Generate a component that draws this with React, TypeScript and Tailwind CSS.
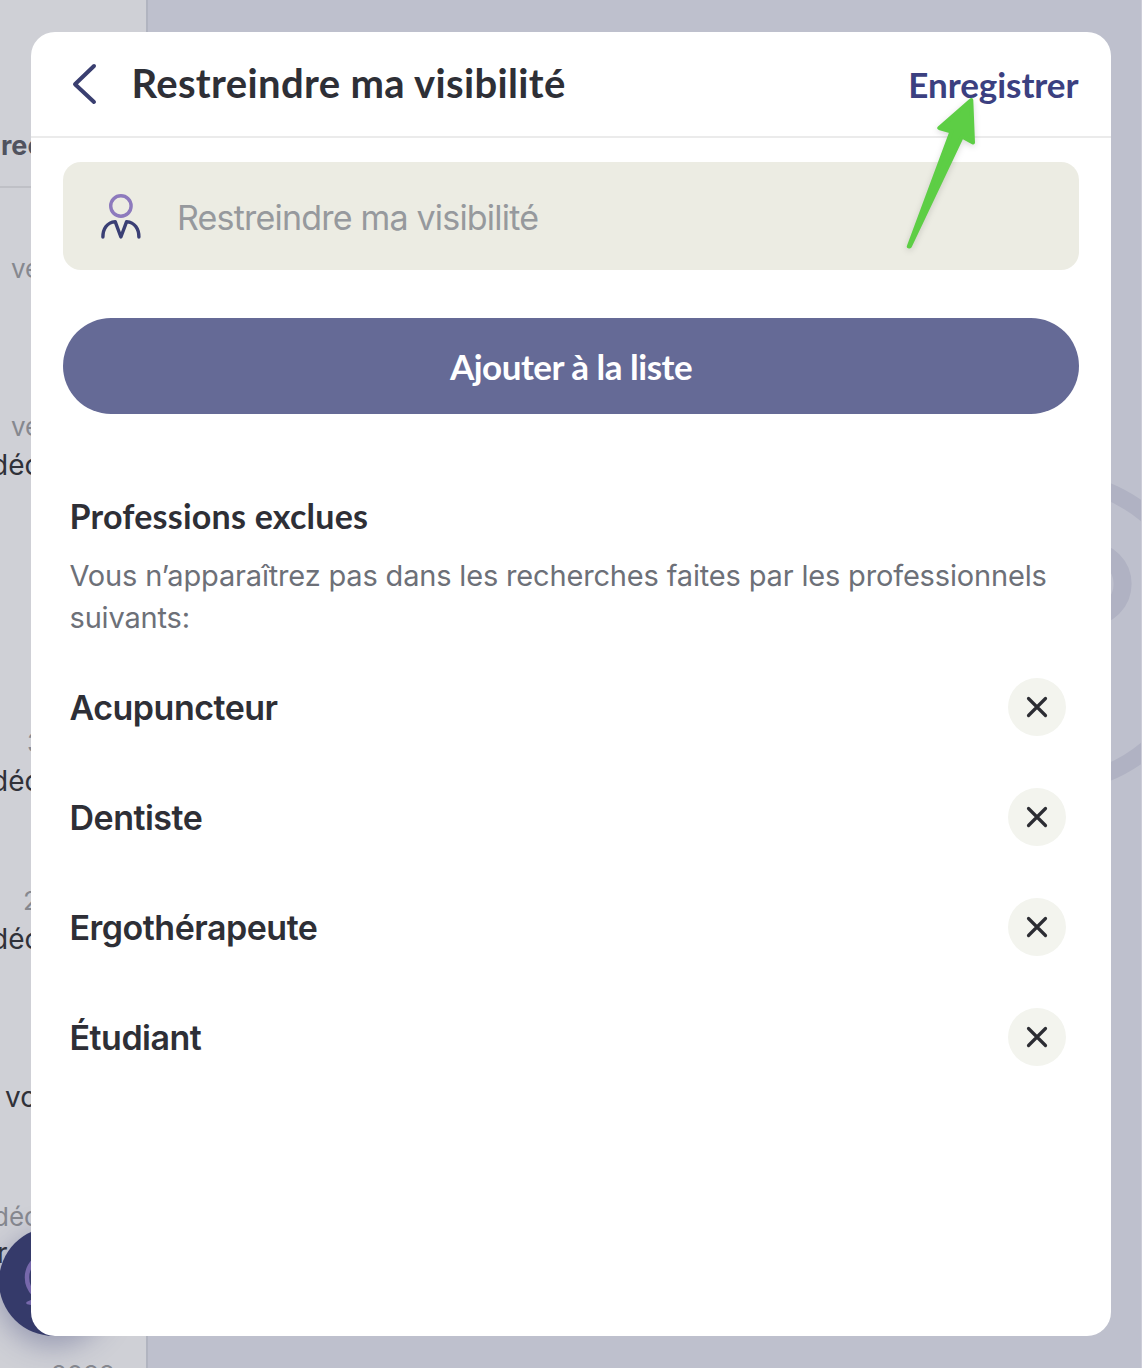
import React from "react";
import { clsx } from "clsx";

type Entry = { date: string; text: string; dateClass?: string; textClass?: string };

const entries: Entry[] = [
  { date: "ve", text: "", dateClass: "pl-[11px]" },
  { date: "ve", text: "déc", dateClass: "pl-[11px]", textClass: "-ml-[9px]" },
  { date: "", text: "" },
  { date: "3", text: "déc", dateClass: "pl-[27px]", textClass: "-ml-[9px]" },
  { date: "2", text: "déc", dateClass: "pl-[23px]", textClass: "-ml-[9px]" },
  { date: "", text: "vo", textClass: "pl-[5px]" },
  { date: "déc", text: "r", dateClass: "-ml-[7px]", textClass: "-ml-[3px] -mt-[2px]" },
  { date: "2022", text: "", dateClass: "pl-[51px]" },
];

const professions = ["Acupuncteur", "Dentiste", "Ergothérapeute", "Étudiant"];

function Sidebar() {
  return (
    <aside className="h-full w-[148px] shrink-0 overflow-hidden border-r-2 border-[#b1b4c0] bg-[#cfd0d6] whitespace-nowrap">
      <div className="flex h-[188px] items-end border-b-2 border-[#bfc0c6] pb-[23px] pl-px text-[27px] leading-[34px] font-bold text-[#51535f]">
        rec
      </div>
      {entries.map((entry, i) => (
        <div key={i} className="flex h-[158px] flex-col pt-[62px]">
          <div className={clsx("h-[38px] text-[26px] leading-[38px] text-[#86888f]", entry.dateClass)}>{entry.date}</div>
          <div className={clsx("h-[38px] text-[28px] leading-[38px] text-[#303139]", entry.textClass)}>{entry.text}</div>
        </div>
      ))}
    </aside>
  );
}

function Backdrop() {
  return (
    <div className="flex h-full w-full">
      <Sidebar />
      <div className="flex flex-1 justify-end border-r border-[#cccdd8] bg-[#bec0cd]">
        <svg className="mt-[460px] h-[340px] w-[181px]" viewBox="960 460 181 340" fill="none" stroke="#b0b2c3">
          <circle cx="1049" cy="632" r="152.5" strokeWidth="17" />
          <circle cx="1089.6" cy="584" r="33" strokeWidth="18" />
        </svg>
      </div>
    </div>
  );
}

function HelpButton() {
  return (
    <div className="absolute top-[1227px] -left-px h-[109px] w-[109px] rounded-full bg-[#353a6a] shadow-[0_8px_28px_2px_rgba(70,75,125,0.4)]">
      <svg className="h-full w-full" viewBox="0 0 109 109" fill="none" stroke="#7768ac" strokeWidth="4.5" strokeLinecap="round" strokeLinejoin="round">
        <circle cx="51.5" cy="50.5" r="23.5" />
        <path d="M28.5 76L36 72.5V77.5Z" fill="#7768ac" strokeWidth="2.5" />
      </svg>
    </div>
  );
}

function PersonIcon() {
  return (
    <svg className="mt-[2px] h-[50px] w-[44px]" viewBox="0 0 44 50" fill="none" strokeWidth="3.4" strokeLinecap="round" strokeLinejoin="round">
      <circle cx="21.9" cy="14" r="10.2" stroke="#8d7abd" />
      <path d="M3.9 45C3.9 37 8 30.4 16.2 29.6L21.9 45L27.6 29.6C35.8 30.4 39.9 37 39.9 45" stroke="#3a3f74" />
    </svg>
  );
}

function Modal() {
  return (
    <section className="relative flex h-[1304px] w-[1080px] flex-col overflow-hidden rounded-[24px] bg-white">
      <header className="flex h-[106px] shrink-0 items-center border-b-2 border-[#ebebeb] pr-[32.5px] pl-[40px]">
        <svg className="h-[44px] w-[26px]" viewBox="0 0 26 44" fill="none" stroke="#3a3f70" strokeWidth="4" strokeLinecap="round" strokeLinejoin="round">
          <path d="M23 4L4 22.2L23 40" />
        </svg>
        <h1 className="-mt-[2px] ml-[34.5px] font-['Lato'] text-[40px] leading-[48px] font-bold tracking-[0.35px] text-[#2e2f36]">Restreindre ma visibilité</h1>
        <button className="ml-auto font-['Lato'] text-[35px] leading-[42px] font-bold tracking-[-0.05px] text-[#3b4080]">Enregistrer</button>
      </header>
      <div className="flex flex-col px-[32px] pt-[24px]">
        <div className="flex h-[108px] items-center rounded-[18px] bg-[#ecece3] pl-[36px]">
          <PersonIcon />
          <span className="mt-[3px] ml-[34px] text-[34px] leading-[44px] tracking-[-0.8px] text-[#96999d]">Restreindre ma visibilité</span>
        </div>
        <button className="mt-[48px] h-[96px] rounded-full bg-[#656a96] font-['Lato'] text-[35px] font-bold tracking-[-0.5px] text-white">Ajouter à la liste</button>
        <h2 className="mt-[80px] ml-[6.5px] font-['Lato'] text-[34px] leading-[44px] font-bold tracking-[0.23px] text-[#2e2f36]">Professions exclues</h2>
        <p className="mt-[17px] ml-[6.5px] text-[29px] leading-[42px] tracking-[-0.17px] whitespace-nowrap text-[#6d7078]">
          Vous n’apparaîtrez pas dans les recherches faites par les professionnels
          <br />
          suivants:
        </p>
        <ul className="mt-[13px] flex flex-col">
          {professions.map((name) => (
            <li key={name} className="flex h-[110px] items-center justify-between pr-[13px] pl-[6.5px]">
              <span className="mt-[2px] text-[34px] leading-[44px] font-semibold tracking-[-0.5px] text-[#2e2f36]">{name}</span>
              <button aria-label="Retirer" className="flex h-[58px] w-[58px] items-center justify-center rounded-full bg-[#f3f4ee]">
                <svg className="h-[22px] w-[22px]" viewBox="0 0 22 22" fill="none" stroke="#2c2d33" strokeWidth="3.2" strokeLinecap="round">
                  <path d="M2.5 2.5L19.5 19.5M19.5 2.5L2.5 19.5" />
                </svg>
              </button>
            </li>
          ))}
        </ul>
      </div>
    </section>
  );
}

export default function App() {
  return (
    <main className="relative h-[1368px] w-[1142px] overflow-hidden font-['Inter',sans-serif]">
      <Backdrop />
      <HelpButton />
      <div className="absolute inset-0 pt-[32px] pl-[31px]">
        <Modal />
      </div>
      <svg className="absolute top-[90px] left-[895px] h-[170px] w-[95px] drop-shadow-[0_2px_3px_rgba(0,0,0,0.15)]" viewBox="895 90 95 170" fill="#5dce45" stroke="#5dce45" strokeWidth="4" strokeLinejoin="round">
        <path d="M971.3 100L939.3 128L951.5 131.5L908.8 246.5L909.8 246.5L962 136.5L973 142.5Z" />
      </svg>
    </main>
  );
}
